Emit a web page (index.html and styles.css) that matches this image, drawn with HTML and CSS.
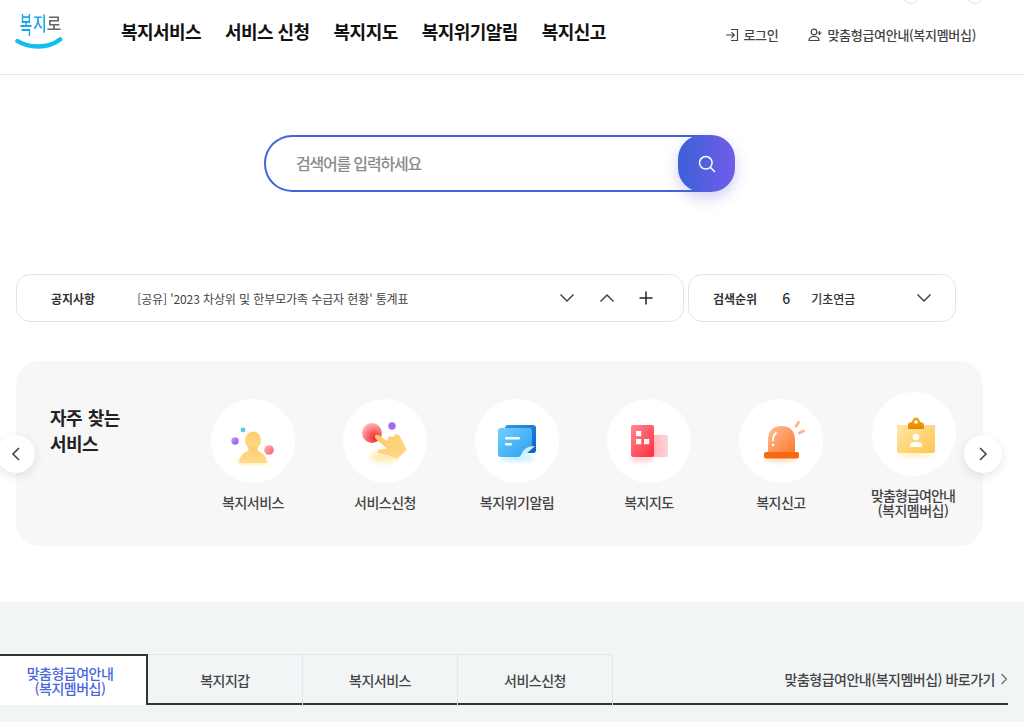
FILE: index.html
```html
<!DOCTYPE html>
<html lang="ko">
<head>
<meta charset="utf-8">
<title>복지로</title>
<link rel="stylesheet" href="styles.css">
</head>
<body>
<header class="header">
  <div class="top-dots"><span class="dot"></span><span class="dot"></span></div>
  <a class="logo">
    <span class="logo-text"><span class="logo-g logo-bok">복</span><span class="logo-g logo-ji">지</span><span class="logo-g logo-ro">로</span></span>
    <svg class="logo-smile" width="48" height="14" viewBox="0 0 48 14"><path d="M2.500 4C13 11 33 12 45 2.500" fill="none" stroke="#12bdf2" stroke-width="4.500" stroke-linecap="round"/></svg>
  </a>
  <nav class="nav">
    <a>복지서비스</a><a>서비스 신청</a><a>복지지도</a><a>복지위기알림</a><a>복지신고</a>
  </nav>
  <div class="util">
    <a class="util-link">
      <svg width="14" height="14" viewBox="0 0 14 14" fill="none" stroke="#444" stroke-width="1.200"><path d="M1 7H9M6.500 4.200 9.300 7 6.500 9.800M6 1.500H12.500V12.500H6"/></svg>
      로그인
    </a>
    <a class="util-link">
      <svg width="15" height="14" viewBox="0 0 15 14" fill="none" stroke="#444" stroke-width="1.200"><circle cx="6" cy="4" r="2.800"/><path d="M1 12.500C1 9.500 3 8.500 6 8.500S11 9.500 11 12.500ZM11.500 3V7M9.500 5H13.500"/></svg>
      맞춤형급여안내(복지멤버십)
    </a>
  </div>
</header>

<main>
  <section class="search-wrap">
    <div class="search">
      <div class="search-field">검색어를 입력하세요</div>
      <button class="search-btn" aria-label="검색">
        <svg width="20" height="20" viewBox="0 0 20 20" fill="none" stroke="#fff" stroke-width="1.500"><circle cx="8.800" cy="8.800" r="6.300"/><path d="M13.400 13.400 18 18"/></svg>
      </button>
    </div>
  </section>

  <section class="info-row">
    <div class="info-box notice">
      <strong class="info-label">공지사항</strong>
      <span class="notice-text">[공유] '2023 차상위 및 한부모가족 수급자 현황' 통계표</span>
      <span class="notice-ctrl">
        <svg width="16" height="10" viewBox="0 0 16 10" fill="none" stroke="#444" stroke-width="1.500"><path d="M1.500 1.500 8 8 14.500 1.500"/></svg>
        <svg width="16" height="10" viewBox="0 0 16 10" fill="none" stroke="#444" stroke-width="1.500"><path d="M1.500 8.500 8 2 14.500 8.500"/></svg>
        <svg width="14" height="14" viewBox="0 0 14 14" fill="none" stroke="#222" stroke-width="1.500"><path d="M7 0.500V13.500M0.500 7H13.500"/></svg>
      </span>
    </div>
    <div class="info-box rank">
      <strong class="info-label">검색순위</strong>
      <span class="rank-num">6</span>
      <span class="rank-text">기초연금</span>
      <svg class="rank-arrow" width="16" height="10" viewBox="0 0 16 10" fill="none" stroke="#444" stroke-width="1.500"><path d="M1.500 1.500 8 8 14.500 1.500"/></svg>
    </div>
  </section>

  <section class="services">
    <h2 class="services-title">자주 찾는<br>서비스</h2>
    <ul class="service-list">
      <li class="service">
        <span class="service-icon">
          <svg width="50" height="50" viewBox="0 0 50 50">
            <defs>
              <linearGradient id="g1" x1="0" y1="0" x2="0" y2="1"><stop offset="0" stop-color="#ffcb70"/><stop offset="1" stop-color="#ffdc8a"/></linearGradient>
              <linearGradient id="g1r" x1="0" y1="0" x2="1" y2="1"><stop offset="0" stop-color="#ffb3b3"/><stop offset="1" stop-color="#ff5f6d"/></linearGradient>
              <linearGradient id="g1p" x1="0" y1="0" x2="1" y2="1"><stop offset="0" stop-color="#c9a0ff"/><stop offset="1" stop-color="#8f4df0"/></linearGradient>
            </defs>
            <ellipse class="glow" cx="25" cy="46" rx="16" ry="3" fill="#ffe9a8"/>
            <ellipse cx="25" cy="24.500" rx="8" ry="9" fill="url(#g1)"/>
            <path d="M21 30H29L30 35C35 37 38.500 40 39 47H11C11.500 40 15 37 20 35Z" fill="url(#g1)"/>
            <circle cx="7" cy="25" r="3.700" fill="url(#g1p)"/>
            <circle cx="15" cy="14" r="2.400" fill="#62c4ee"/>
            <circle cx="41" cy="34" r="4.800" fill="url(#g1r)"/>
          </svg>
        </span>
        <span class="service-name">복지서비스</span>
      </li>
      <li class="service">
        <span class="service-icon">
          <svg width="50" height="50" viewBox="0 0 50 50">
            <defs>
              <radialGradient id="g2r" cx="0.650" cy="0.750" r="0.750"><stop offset="0" stop-color="#f5222d"/><stop offset="1" stop-color="#ffb0b0"/></radialGradient>
              <linearGradient id="g2h" x1="0" y1="0" x2="1" y2="1"><stop offset="0" stop-color="#ffc766"/><stop offset="1" stop-color="#ffdc8c"/></linearGradient>
            </defs>
            <ellipse class="glow" cx="24" cy="41" rx="14" ry="6" fill="#ffedb8"/>
            <circle cx="12" cy="17" r="10" fill="url(#g2r)"/>
            <circle cx="32" cy="10" r="3.700" fill="#a66bf2"/>
            <path d="M15 20C15.500 18.500 17.500 18.500 19 19.500L27 25 29 20 33 21 36 18 39 19 47 34 37 43 28 39 18 37 17.500 34 27 32.500 16 23C15 22 14.700 21 15 20Z" fill="url(#g2h)"/>
          </svg>
        </span>
        <span class="service-name">서비스신청</span>
      </li>
      <li class="service">
        <span class="service-icon">
          <svg width="50" height="50" viewBox="0 0 50 50">
            <defs>
              <linearGradient id="g3b" x1="0" y1="0" x2="1" y2="1"><stop offset="0" stop-color="#2f9bf0"/><stop offset="1" stop-color="#0b62b8"/></linearGradient>
              <linearGradient id="g3f" x1="0" y1="0" x2="1" y2="1"><stop offset="0" stop-color="#6fd0fb"/><stop offset="1" stop-color="#2b9ff2"/></linearGradient>
            </defs>
            <ellipse class="glow" cx="25" cy="42" rx="17" ry="3" fill="#bdeaff"/>
            <rect x="13" y="9" width="31" height="28" rx="3" fill="url(#g3b)"/>
            <path d="M9 12H37A3 3 0 0 1 40 15V29L27 41H9A3 3 0 0 1 6 38V15A3 3 0 0 1 9 12Z" fill="url(#g3f)"/>
            <path d="M29 39C31 33 36 30 43 30L33 39Z" fill="#cfeefd"/>
            <rect x="13" y="21" width="15" height="2.600" rx="1.300" fill="#fff"/>
            <rect x="13" y="27" width="7" height="2.600" rx="1.300" fill="#fff"/>
          </svg>
        </span>
        <span class="service-name">복지위기알림</span>
      </li>
      <li class="service">
        <span class="service-icon">
          <svg width="50" height="50" viewBox="0 0 50 50">
            <defs>
              <linearGradient id="g4a" x1="0" y1="0" x2="1" y2="1"><stop offset="0" stop-color="#ff8a92"/><stop offset="1" stop-color="#ff2b3d"/></linearGradient>
              <linearGradient id="g4b" x1="0" y1="0" x2="1" y2="0"><stop offset="0" stop-color="#ffb3b8"/><stop offset="1" stop-color="#ffd5d8"/></linearGradient>
            </defs>
            <ellipse class="glow" cx="18" cy="43" rx="12" ry="2.500" fill="#ffc5ca"/>
            <rect x="28" y="19" width="16" height="22" rx="2" fill="url(#g4b)"/>
            <rect x="7" y="9" width="23" height="32" rx="2" fill="url(#g4a)"/>
            <rect x="12" y="15" width="5.200" height="5.200" fill="#fff"/>
            <rect x="12" y="23" width="5.200" height="5.200" fill="#fff"/>
            <rect x="20" y="23" width="5.200" height="5.200" fill="#fff"/>
          </svg>
        </span>
        <span class="service-name">복지지도</span>
      </li>
      <li class="service">
        <span class="service-icon">
          <svg width="50" height="50" viewBox="0 0 50 50">
            <defs>
              <linearGradient id="g5" x1="0" y1="0" x2="1" y2="1"><stop offset="0" stop-color="#ffbd94"/><stop offset="1" stop-color="#ff7a2e"/></linearGradient>
            </defs>
            <ellipse class="glow" cx="25" cy="43" rx="16" ry="2.500" fill="#ffd3b5"/>
            <path d="M12 37V24C12 15 17 10 25.500 10S39 15 39 24V37Z" fill="url(#g5)"/>
            <rect x="8" y="36" width="35" height="6.500" rx="2" fill="#f8690f"/>
            <path d="M17 24.500C17 21 18 18.500 20 17" fill="none" stroke="#fff" stroke-width="1.800" stroke-linecap="round"/>
            <circle cx="17" cy="29" r="1.200" fill="#fff"/>
            <path d="M40 10 42.500 6.500M43.500 17 47.500 15" stroke="#fdb68e" stroke-width="3" stroke-linecap="round"/>
          </svg>
        </span>
        <span class="service-name">복지신고</span>
      </li>
      <li class="service service-last">
        <span class="service-icon">
          <svg width="50" height="50" viewBox="0 0 50 50">
            <defs>
              <linearGradient id="g6" x1="0" y1="0" x2="1" y2="1"><stop offset="0" stop-color="#ffe6a8"/><stop offset="1" stop-color="#ffc450"/></linearGradient>
              <linearGradient id="g6c" x1="0" y1="0" x2="0" y2="1"><stop offset="0" stop-color="#f2a516"/><stop offset="1" stop-color="#e68a00"/></linearGradient>
            </defs>
            <ellipse class="glow" cx="27" cy="46" rx="17" ry="2.500" fill="#ffedb8"/>
            <path d="M9.500 16H18C20 21 34 21 36 16H44.500C45.500 16 46 16.500 46 17.500V42C46 43.300 45.300 44 44 44H10C8.700 44 8 43.300 8 42V17.500C8 16.500 8.500 16 9.500 16Z" fill="url(#g6)"/>
            <path d="M19 19V16C19 14 20.500 13 23 13 23.500 10 25 8.500 27 8.500S30.500 10 31 13C33.500 13 35 14 35 16V19C35 20 34 20 33 20H21C20 20 19 20 19 19Z" fill="url(#g6c)"/>
            <circle cx="27" cy="13" r="1.800" fill="#fff"/>
            <circle cx="27" cy="28" r="3.300" fill="#fff"/>
            <path d="M21 36C21 34 23 33 27 33S33 34 33 36V38H21Z" fill="#fff"/>
          </svg>
        </span>
        <span class="service-name"><span class="service-name-tight">맞춤형급여안내</span><br>(복지멤버십)</span>
      </li>
    </ul>
    <button class="circle-btn prev" aria-label="이전">
      <svg width="10" height="14" viewBox="0 0 10 14" fill="none" stroke="#444" stroke-width="1.600"><path d="M8 1 2 7 8 13"/></svg>
    </button>
    <button class="circle-btn next" aria-label="다음">
      <svg width="10" height="14" viewBox="0 0 10 14" fill="none" stroke="#444" stroke-width="1.600"><path d="M2 1 8 7 2 13"/></svg>
    </button>
  </section>

  <section class="tabs-section">
    <div class="tabs">
      <a class="tab active">맞춤형급여안내<br>(복지멤버십)</a>
      <a class="tab">복지지갑</a>
      <a class="tab">복지서비스</a>
      <a class="tab">서비스신청</a>
      <a class="tabs-more">맞춤형급여안내(복지멤버십) 바로가기
        <svg width="8" height="12" viewBox="0 0 8 12" fill="none" stroke="#666" stroke-width="1.100"><path d="M1.500 1 6.500 6 1.500 11"/></svg>
      </a>
    </div>
  </section>
</main>
</body>
</html>
```

FILE: styles.css
```css
* { box-sizing: border-box; }
html, body { margin: 0; padding: 0; height: 722px; overflow: hidden; }
body {
  background: #fff;
  color: #222;
  font-family: "Noto Sans CJK KR", "Noto Sans", sans-serif;
}
a { color: inherit; text-decoration: none; }
ul { list-style: none; margin: 0; padding: 0; }
button { border: 0; padding: 0; cursor: pointer; }

.header {
  position: relative;
  height: 75px;
  display: flex;
  align-items: flex-start;
  border-bottom: 1px solid #e6e6e6;
  padding-left: 15px;
}
.top-dots {
  position: absolute;
  top: -14px;
  left: 902px;
  display: flex;
  gap: 46px;
}
.dot {
  width: 18px;
  height: 18px;
  border: 1px solid #e4e4e4;
  border-radius: 50%;
}
.logo {
  width: 106px;
  padding-top: 8px;
  display: flex;
  flex-direction: column;
}
.logo-text {
  height: 29px;
  padding-left: 4px;
  display: flex;
  align-items: center;
  font-size: 15px;
  line-height: 29px;
  font-weight: 500;
}
.logo-g { display: block; width: 14px; }
.logo-bok { color: #1fa5e8; transform: scale(0.9, 1.55); }
.logo-ji { color: #1fa5e8; transform: scale(1, 1.25); }
.logo-ro { color: #666; transform: scale(1.05, 1.1); }
.logo-smile { display: block; }
.nav {
  display: flex;
  gap: 24px;
  padding-top: 18px;
  font-size: 18px;
  line-height: 26px;
  font-weight: 700;
  letter-spacing: -0.55px;
  color: #111;
}
.util {
  margin-left: auto;
  padding: 26px 48px 0 0;
  display: flex;
  gap: 30px;
  font-size: 13px;
  line-height: 18px;
  font-weight: 500;
  letter-spacing: -0.3px;
  color: #444;
}
.util-link { display: flex; align-items: center; gap: 4px; }

.search-wrap {
  padding: 60px 0 82px 264px;
}
.search {
  width: 471px;
  height: 57px;
  display: flex;
  border: 2px solid #4264d6;
  border-right: 0;
  border-radius: 28px;
}
.search-field {
  flex: 1;
  padding-left: 30px;
  font-size: 16px;
  line-height: 52px;
  font-weight: 500;
  letter-spacing: -1.2px;
  color: #8b8b8b;
}
.search-btn {
  width: 57px;
  height: 57px;
  margin: -2px 0;
  border-radius: 24px;
  display: flex;
  align-items: center;
  justify-content: center;
  background: linear-gradient(90deg, #3c62d6, #715ceb);
  box-shadow: 0 6px 14px rgba(90, 90, 220, 0.28);
}

.info-row {
  display: flex;
  gap: 4px;
  padding-left: 16px;
}
.info-box {
  height: 48px;
  display: flex;
  align-items: center;
  border: 1px solid #e4e4e4;
  border-radius: 14px;
  font-size: 12px;
}
.info-label { font-weight: 700; color: #333; }
.notice { width: 668px; padding-left: 34px; }
.notice-text { margin-left: 42px; color: #444; letter-spacing: -0.1px; }
.notice-ctrl {
  margin-left: auto;
  padding-right: 30px;
  display: flex;
  align-items: center;
  gap: 24px;
}
.rank { width: 268px; padding-left: 24px; }
.rank-num { margin-left: 25px; font-size: 14px; font-weight: 500; color: #333; }
.rank-text { margin-left: 21px; font-weight: 500; color: #333; }
.rank-arrow { margin-left: auto; margin-right: 23px; }

.services {
  position: relative;
  width: 967px;
  height: 185px;
  margin: 39px 0 56px 16px;
  padding-left: 34px;
  display: flex;
  align-items: center;
  background: #f7f7f7;
  border-radius: 24px;
}
.services-title {
  align-self: flex-start;
  width: 137px;
  margin: 0;
  padding-top: 43px;
  font-size: 18px;
  line-height: 26px;
  font-weight: 700;
  letter-spacing: -0.5px;
  word-spacing: 1px;
  color: #222;
}
.service-list { display: flex; align-items: center; margin-top: 2px; }
.service {
  width: 132px;
  display: flex;
  flex-direction: column;
  align-items: center;
}
.service-last { margin-top: 1px; }
.service-last .service-icon { margin-left: 2px; }
.service-icon {
  width: 84px;
  height: 84px;
  border-radius: 50%;
  background: #fff;
  display: flex;
  align-items: center;
  justify-content: center;
}
.glow { filter: blur(2.500px); }
.service-name {
  margin-top: 12px;
  font-size: 14px;
  line-height: 15px;
  font-weight: 500;
  letter-spacing: -0.5px;
  text-align: center;
  color: #444;
}
.service-name-tight { letter-spacing: -0.9px; }
.circle-btn {
  position: absolute;
  top: 74px;
  width: 38px;
  height: 38px;
  border-radius: 50%;
  background: #fff;
  display: flex;
  align-items: center;
  justify-content: center;
  box-shadow: 0 3px 10px rgba(60, 70, 100, 0.14);
}
.prev { left: -19px; }
.next { right: -19px; }

.tabs-section {
  height: 120px;
  padding-top: 52px;
  background: #f2f5f6;
}
.tabs {
  width: 1008px;
  height: 51px;
  display: flex;
  border-bottom: 2px solid #333;
  font-size: 14px;
  font-weight: 500;
  letter-spacing: -0.5px;
}
.tab {
  width: 155px;
  height: 51px;
  display: flex;
  align-items: center;
  justify-content: center;
  text-align: center;
  line-height: 14.500px;
  color: #444;
  border-top: 1px solid #e3e6e8;
  border-right: 1px solid #e3e6e8;
}
.tab.active {
  width: 148px;
  padding-right: 6px;
  background: #fff;
  color: #4a66dc;
  border-top: 2px solid #333;
  border-right: 2px solid #333;
}
.tabs-more {
  margin-left: auto;
  display: flex;
  align-items: center;
  gap: 5px;
  color: #444;
}
```
